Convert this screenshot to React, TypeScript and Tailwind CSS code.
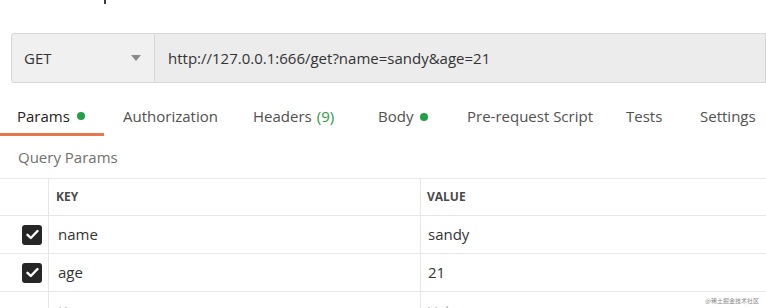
const tabs = [
  { label: "Params", w: "w-[104px] pl-[17px]", dot: true, active: true },
  { label: "Authorization", w: "w-[149px] pl-[19px]" },
  { label: "Headers", w: "w-[125px]", count: "(9)" },
  { label: "Body", w: "w-[89px]", dot: true },
  { label: "Pre-request Script", w: "w-[159px]" },
  { label: "Tests", w: "w-[74px]" },
  { label: "Settings", w: "w-[80px]" },
];

const rows = [
  { key: "name", value: "sandy" },
  { key: "age", value: "21" },
];

const Check = () => (
  <div className="ml-[22px] w-[20px] h-[20px] rounded-[3px] bg-[#262626] flex items-center justify-center">
    <svg width="13" height="11" viewBox="0 0 13 11" fill="none">
      <path d="M1.5 5.8 L4.8 9 L11.5 2" stroke="white" strokeWidth="2.4" strokeLinecap="round" strokeLinejoin="round" />
    </svg>
  </div>
);

const App = () => {
  return (
    <div className="relative w-[766px] h-[308px] overflow-hidden bg-white font-['Open_Sans',sans-serif] text-[#333]">
      <div className="h-[5px]">
        <div className="ml-[104px] w-[2px] h-[4px] bg-[#3a3a3a]" />
      </div>

      {/* method + url */}
      <div className="mt-[28px] ml-[11px] flex h-[50px]">
        <div className="w-[144px] flex items-center justify-between bg-[#f0f0f0] border border-[#d6d6d6] rounded-l-[3px] pl-[12px] pr-[13px]">
          <span className="text-[15px] text-[#333]">GET</span>
          <svg width="10" height="6" viewBox="0 0 10 6">
            <path d="M0 0 H10 L5 6 Z" fill="#8a8a8a" />
          </svg>
        </div>
        <div className="flex-1 flex items-center bg-[#ececec] border-y border-r border-[#d6d6d6] pl-[13px]">
          <span className="text-[15px] text-[#333]">http://127.0.0.1:666/get?name=sandy&amp;age=21</span>
        </div>
      </div>

      {/* tabs */}
      <div className="mt-[14px] flex h-[39px]">
        {tabs.map((t) => (
          <div
            key={t.label}
            className={`${t.w} shrink-0 flex items-center text-[15px] ${
              t.active ? "border-b-[3px] border-[#e5784e] pt-[2px] text-[#222]" : "text-[#505050]"
            }`}
          >
            <span>{t.label}</span>
            {t.count && <span className="ml-[5px] text-[#2b9a45]">{t.count}</span>}
            {t.dot && <span className="ml-[7px] w-[8px] h-[8px] rounded-full bg-[#23a047]" />}
          </div>
        ))}
      </div>

      <div className="h-[42px] flex items-center pl-[18px] text-[15px] text-[#707070]">Query Params</div>

      {/* table */}
      <div className="border-t border-[#e6e6e6]">
        <div className="grid grid-cols-[49px_372px_1fr] h-[37px] border-b border-[#e6e6e6]">
          <div className="border-r border-[#e6e6e6]" />
          <div className="border-r border-[#e6e6e6] flex items-center pl-[7px] text-[12px] font-bold text-[#4a4a4a]">KEY</div>
          <div className="flex items-center pl-[6px] text-[12px] font-bold text-[#4a4a4a]">VALUE</div>
        </div>
        {rows.map((r) => (
          <div key={r.key} className="grid grid-cols-[49px_372px_1fr] h-[38px] border-b border-[#e6e6e6]">
            <div className="border-r border-[#e6e6e6] flex items-center">
              <Check />
            </div>
            <div className="border-r border-[#e6e6e6] flex items-center pl-[9px] text-[15px]">{r.key}</div>
            <div className="flex items-center pl-[7px] text-[15px]">{r.value}</div>
          </div>
        ))}
        <div className="grid grid-cols-[49px_372px_1fr] h-[38px]">
          <div className="border-r border-[#e6e6e6]" />
          <div className="border-r border-[#e6e6e6] flex items-center pl-[9px] text-[15px] text-[#b5b5b5]">Key</div>
          <div className="flex items-center pl-[7px] text-[15px] text-[#b5b5b5]">Value</div>
        </div>
      </div>

      <div className="absolute right-[7px] top-[297px] text-[6px] leading-[8px] text-[#8a8a8a] font-['Noto_Sans_CJK_SC',sans-serif]">
        @稀土掘金技术社区
      </div>
    </div>
  );
};

export default App;
